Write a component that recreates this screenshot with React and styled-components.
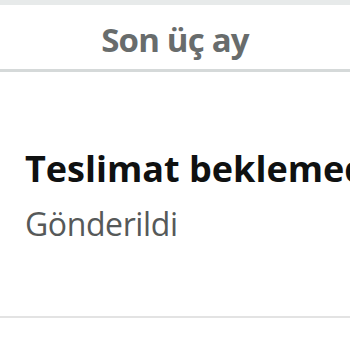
import React from "react";
import styled, { createGlobalStyle } from "styled-components";

const Global = createGlobalStyle`
  body {
    margin: 0;
    background: #ffffff;
    font-family: "Open Sans", "Noto Sans", sans-serif;
    overflow: hidden;
  }
`;

function App() {
  return (
    <Page>
      <Global />
      <TopStrip />
      <Header>
        <HeaderTitle>Son üç ay</HeaderTitle>
      </Header>
      <Order>
        <OrderTitle>Teslimat beklemede</OrderTitle>
        <OrderStatus>Gönderildi</OrderStatus>
      </Order>
    </Page>
  );
}

export default App;

const Page = styled.div`
  width: 350px;
  height: 350px;
  overflow: hidden;
  display: flex;
  flex-direction: column;
`;

const TopStrip = styled.div`
  height: 5px;
  flex-shrink: 0;
  background: #e7eaea;
`;

const Header = styled.div`
  height: 49px;
  flex-shrink: 0;
  padding-top: 15px;
  display: flex;
  justify-content: center;
  border-bottom: 3px solid #d5d9d9;
`;

const HeaderTitle = styled.div`
  font-size: 33px;
  line-height: 40px;
  font-weight: 700;
  letter-spacing: -0.8px;
  color: #686c6c;
`;

const Order = styled.div`
  height: 246px;
  flex-shrink: 0;
  box-sizing: border-box;
  padding: 77px 0 0 25px;
  display: flex;
  flex-direction: column;
  gap: 15px;
  border-bottom: 2px solid #e3e3e3;
`;

const OrderTitle = styled.div`
  font-size: 36px;
  line-height: 40px;
  font-weight: 700;
  color: #0f1111;
  white-space: nowrap;
`;

const OrderStatus = styled.div`
  font-size: 32px;
  line-height: 40px;
  letter-spacing: -0.4px;
  color: #565959;
`;
